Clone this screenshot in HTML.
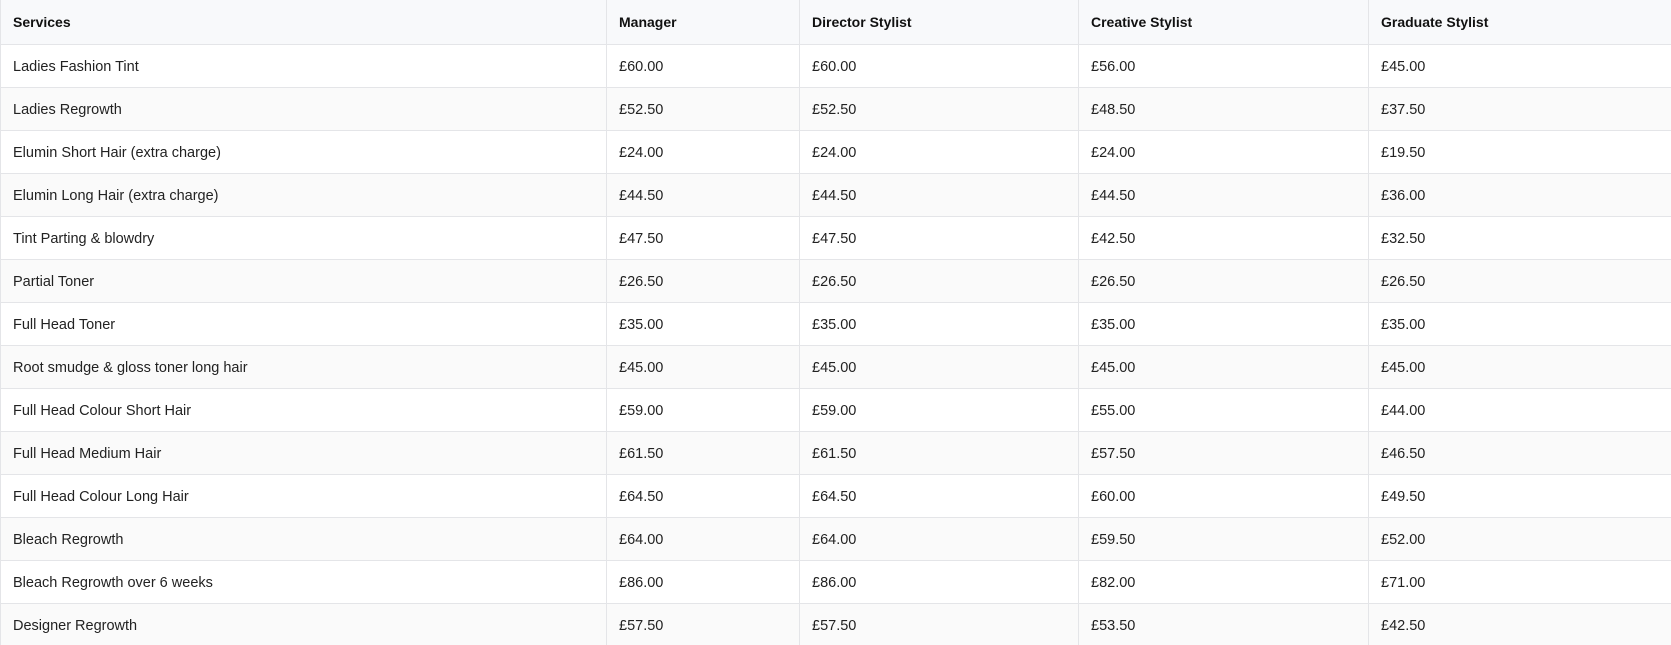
<!DOCTYPE html>
<html><head><style>
html,body{margin:0;padding:0;background:#fff;width:1671px;height:645px;overflow:hidden}
table{border-collapse:collapse;width:1671px;table-layout:fixed;font-family:"Liberation Sans",sans-serif;font-size:14.5px;color:#222}
th,td{border:1px solid #e4e5e8;padding:0 12px;text-align:left;height:42px}
td{padding-top:2px;height:40px}
th{background:#f8f9fb;font-weight:bold;height:44px;font-size:14px;color:#111}
tr:nth-child(odd) td{background:#fafafa}
tr:first-child th{border-top:none}
tr th:last-child,tr td:last-child{border-right:none}
</style></head><body>
<table>
<colgroup><col style="width:606px"><col style="width:193px"><col style="width:279px"><col style="width:290px"><col></colgroup>
<tr><th>Services</th><th>Manager</th><th>Director Stylist</th><th>Creative Stylist</th><th>Graduate Stylist</th></tr>
<tr><td>Ladies Fashion Tint</td><td>£60.00</td><td>£60.00</td><td>£56.00</td><td>£45.00</td></tr>
<tr><td>Ladies Regrowth</td><td>£52.50</td><td>£52.50</td><td>£48.50</td><td>£37.50</td></tr>
<tr><td>Elumin Short Hair (extra charge)</td><td>£24.00</td><td>£24.00</td><td>£24.00</td><td>£19.50</td></tr>
<tr><td>Elumin Long Hair (extra charge)</td><td>£44.50</td><td>£44.50</td><td>£44.50</td><td>£36.00</td></tr>
<tr><td>Tint Parting &amp; blowdry</td><td>£47.50</td><td>£47.50</td><td>£42.50</td><td>£32.50</td></tr>
<tr><td>Partial Toner</td><td>£26.50</td><td>£26.50</td><td>£26.50</td><td>£26.50</td></tr>
<tr><td>Full Head Toner</td><td>£35.00</td><td>£35.00</td><td>£35.00</td><td>£35.00</td></tr>
<tr><td>Root smudge &amp; gloss toner long hair</td><td>£45.00</td><td>£45.00</td><td>£45.00</td><td>£45.00</td></tr>
<tr><td>Full Head Colour Short Hair</td><td>£59.00</td><td>£59.00</td><td>£55.00</td><td>£44.00</td></tr>
<tr><td>Full Head Medium Hair</td><td>£61.50</td><td>£61.50</td><td>£57.50</td><td>£46.50</td></tr>
<tr><td>Full Head Colour Long Hair</td><td>£64.50</td><td>£64.50</td><td>£60.00</td><td>£49.50</td></tr>
<tr><td>Bleach Regrowth</td><td>£64.00</td><td>£64.00</td><td>£59.50</td><td>£52.00</td></tr>
<tr><td>Bleach Regrowth over 6 weeks</td><td>£86.00</td><td>£86.00</td><td>£82.00</td><td>£71.00</td></tr>
<tr><td>Designer Regrowth</td><td>£57.50</td><td>£57.50</td><td>£53.50</td><td>£42.50</td></tr>
</table>
</body></html>
